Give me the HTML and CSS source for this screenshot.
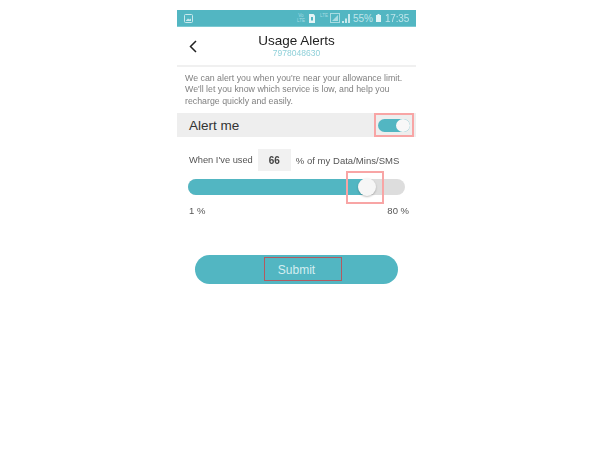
FILE: index.html
```html
<!DOCTYPE html>
<html lang="en">
<head>
<meta charset="utf-8">
<title>Usage Alerts</title>
<link rel="stylesheet" href="styles.css">
</head>
<body>
<main class="phone">
  <div class="status">
    <svg class="pic" width="9" height="9" viewBox="0 0 9 9"><rect x=".5" y=".5" width="8" height="8" rx="1" fill="none" stroke="#c9e9ed"/><path d="M2 6.500 4 4.500 5.500 5.500 7 4.500V7H2z" fill="#c9e9ed"/></svg>
    <span class="status-right">
      <span class="tiny">Vo<br>LTE</span>
      <svg class="sim" width="6" height="9" viewBox="0 0 6 9"><path d="M0 0H4.500L6 1.500V9H0z" fill="#e4f4f6"/><rect x="2" y="3" width="2" height="3.500" fill="#52b6c2"/></svg>
      <span class="tiny lte">LTE</span>
      <svg class="net" width="10" height="10" viewBox="0 0 10 10"><rect x=".5" y=".5" width="9" height="9" fill="none" stroke="#a9dce2"/><path d="M2 8 8 2V8z" fill="#a9dce2"/></svg>
      <svg class="bars" width="8" height="9" viewBox="0 0 8 9"><path d="M0 9V7H2V9zM3 9V4.500H5V9zM6 9V0H8V9z" fill="#c9e9ed"/></svg>
      <span class="pct">55%</span>
      <svg class="batt" width="5" height="8" viewBox="0 0 5 8"><path d="M1.500 0H3.500V1H5V8H0V1H1.500z" fill="#e4f4f6"/></svg>
      <span class="time">17:35</span>
    </span>
  </div>
  <header class="head">
    <svg class="back" width="9" height="14" viewBox="0 0 9 14"><path d="M7 1 1.500 6.500 7 12" fill="none" stroke="#222" stroke-width="1.500"/></svg>
    <h1>Usage Alerts</h1>
    <p class="num">7978048630</p>
  </header>
  <p class="intro">We can alert you when you're near your allowance limit. We'll let you know which service is low, and help you recharge quickly and easily.</p>
  <div class="alert">
    <span>Alert me</span>
    <span class="toggle"><span class="knob"></span></span>
    <span class="mark mark-toggle"></span>
  </div>
  <div class="used">
    <span>When I've used</span>
    <span class="value">66</span>
    <span class="used-tail">% of my Data/Mins/SMS</span>
  </div>
  <div class="slider">
    <div class="fill"></div>
    <span class="thumb"></span>
    <span class="mark mark-thumb"></span>
  </div>
  <div class="range"><span>1 %</span><span>80 %</span></div>
  <div class="submit">
    Submit
    <span class="mark mark-submit"></span>
  </div>
</main>
</body>
</html>
```

FILE: styles.css
```css
* { box-sizing: border-box; }
html, body { margin: 0; background: #fff; }
body { height: 450px; overflow: hidden; font-family: "Liberation Sans", Arial, sans-serif; }
.phone { width: 239px; margin-left: 177px; padding-top: 10px; filter: blur(.35px); }
.status { height: 17px; background: #52b6c2; display: flex; align-items: center; justify-content: space-between; padding: 0 7px; color: #bfe5ea; font-size: 9.500px; border-bottom: 1px solid #7cc9d2; }
.status-right { display: flex; align-items: center; }
.tiny { font-size: 4.500px; width: 8px; line-height: 5px; color: #a9dce2; text-align: center; }
.sim { margin-left: 4px; }
.lte { margin-left: 5px; align-self: flex-start; }
.net { margin-left: 2px; }
.bars { margin-left: 2px; }
.pct { margin-left: 3px; font-size: 10px; }
.batt { margin-left: 3px; }
.time { margin-left: 4px; font-size: 10px; letter-spacing: -.2px; }
.head { position: relative; height: 40px; border-bottom: 2px solid #f0f0f0; text-align: center; padding-top: 6px; }
.back { position: absolute; left: 12px; top: 13px; }
.head h1 { margin: 0; font-size: 13.500px; line-height: 16px; font-weight: 400; color: #222; }
.num { margin: 0; font-size: 8.500px; line-height: 9px; color: #8fd0d9; }
.intro { margin: 0; padding: 6px 0 0 8px; height: 46px; width: 236px; font-size: 8.800px; line-height: 11.300px; color: #808080; }
.alert { position: relative; height: 24px; background: #eee; display: flex; align-items: center; justify-content: space-between; padding: 0 6px 0 12px; font-size: 13.500px; color: #333; }
.toggle { width: 32px; height: 13px; border-radius: 7px; background: #52b6c2; display: flex; justify-content: flex-end; }
.knob { width: 14px; height: 13px; border-radius: 50%; background: #f8f8f8; }
.mark { position: absolute; border: 2px solid #f8a5a5; }
.mark-toggle { left: 197px; top: 0; width: 40px; height: 24px; }
.used { display: flex; align-items: center; height: 22px; margin-top: 12px; padding-left: 12px; font-size: 9.300px; color: #555; }
.used-tail { letter-spacing: .03px; font-size: 9.500px; }
.value { width: 33px; height: 22px; margin: 0 5px; background: #f1f1f1; display: flex; align-items: center; justify-content: center; font-size: 10px; font-weight: 700; color: #444; }
.slider { position: relative; height: 16px; margin: 8px 11px 0; background: #ddd; border-radius: 8px; }
.fill { width: 179px; height: 100%; background: #52b6c2; border-radius: 8px 0 0 8px; }
.thumb { position: absolute; left: 170px; top: -1px; width: 18px; height: 18px; border-radius: 50%; background: #f6f6f6; box-shadow: 0 1px 2px rgba(0,0,0,.25); }
.mark-thumb { left: 158px; top: -8px; width: 38px; height: 33px; }
.range { display: flex; justify-content: space-between; margin: 10px 7px 0 12px; font-size: 9.500px; line-height: 11px; color: #555; }
.submit { position: relative; width: 203px; height: 29px; margin: 39px 0 0 18px; background: #52b6c2; border-radius: 15px; display: flex; justify-content: center; align-items: center; font-size: 12px; color: #d5eef1; }
.mark-submit { left: 69px; top: 2px; width: 78px; height: 24px; border: 1.500px solid #b35a60; }
```
